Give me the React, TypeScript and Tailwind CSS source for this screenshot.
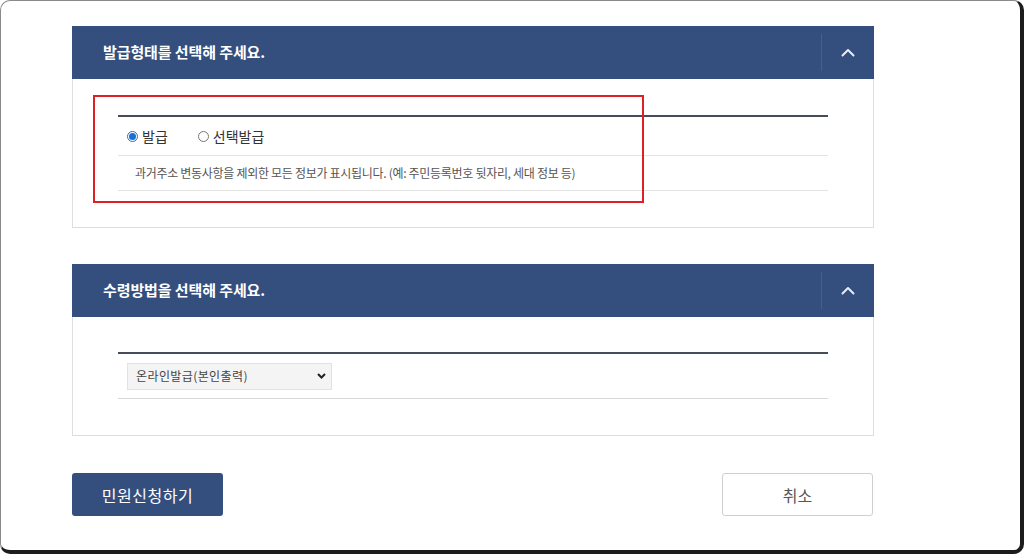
import { useState } from 'react';

const font = { fontFamily: '"Noto Sans CJK KR", "Noto Sans", sans-serif' };

function Chevron() {
  return (
    <svg width="14" height="9" viewBox="0 0 14 9" fill="none">
      <path d="M1.5 7.5L7 2L12.5 7.5" stroke="#e8edf6" strokeWidth="2" strokeLinecap="round" strokeLinejoin="round" />
    </svg>
  );
}

function PanelHeader({ title }: { title: string }) {
  return (
    <div className="flex h-[53px] items-center bg-[#344e7e]">
      <h2 className="flex-1 pl-[31px] text-[15px] font-bold tracking-[-0.1px] text-white">{title}</h2>
      <div className="h-[37px] w-px bg-[#45608f]" />
      <button type="button" className="flex h-full w-[52px] items-center justify-center">
        <Chevron />
      </button>
    </div>
  );
}

function Radio({ checked, label, onClick }: { checked: boolean; label: string; onClick: () => void }) {
  return (
    <label className="flex cursor-pointer items-center gap-[4px]" onClick={onClick}>
      {checked ? (
        <span className="flex h-[11px] w-[11px] items-center justify-center rounded-full border border-[#1a6fd6] bg-white">
          <span className="h-[7px] w-[7px] rounded-full bg-[#1a6fd6]" />
        </span>
      ) : (
        <span className="h-[11px] w-[11px] rounded-full border border-[#777] bg-white" />
      )}
      <span className="text-[14px] text-[#333]">{label}</span>
    </label>
  );
}

export default function App() {
  const [kind, setKind] = useState('issue');

  return (
    <div className="h-[554px] w-[1024px] overflow-hidden bg-white" style={font}>
      <div className="h-full w-full rounded-[10px] border-t border-l border-r-4 border-b-4 border-t-[#8a8a8a] border-l-[#8a8a8a] border-r-[#1c1c1c] border-b-[#1c1c1c] bg-white pl-[71px] pt-[25px]">
        <div className="flex w-[802px] flex-col">
          <section>
            <PanelHeader title="발급형태를 선택해 주세요." />
            <div className="relative border-x border-b border-[#dedede] px-[45px] pt-[36px] pb-[36px]">
              <div className="h-[2px] bg-[#474d58]" />
              <div className="flex h-[38px] items-center gap-[30px] pl-[9px]">
                <Radio checked={kind === 'issue'} label="발급" onClick={() => setKind('issue')} />
                <Radio checked={kind === 'select'} label="선택발급" onClick={() => setKind('select')} />
              </div>
              <div className="flex h-[36px] items-center border-y border-[#e3e3e3] pl-[17px] text-[12px] tracking-[-0.3px] text-[#555]">
                과거주소 변동사항을 제외한 모든 정보가 표시됩니다. (예: 주민등록번호 뒷자리, 세대 정보 등)
              </div>
              <div className="pointer-events-none absolute left-[20px] top-[16px] h-[108px] w-[551px] border-2 border-[#dd1f26]" />
            </div>
          </section>

          <section className="mt-[36px]">
            <PanelHeader title="수령방법을 선택해 주세요." />
            <div className="border-x border-b border-[#dedede] px-[45px] pt-[35px] pb-[36px]">
              <div className="h-[2px] bg-[#474d58]" />
              <div className="flex h-[45px] items-center border-b border-[#d8d8d8] pl-[9px]">
                <div className="flex h-[27px] w-[205px] cursor-pointer items-center border border-[#e2e2e2] bg-[#f4f4f4] text-[12px] tracking-[0.4px] text-[#444]">
                  <span className="ml-[8px] flex-1">온라인발급(본인출력)</span>
                  <svg className="mr-[5px]" width="9" height="6" viewBox="0 0 9 6" fill="none">
                    <path d="M1 1L4.5 4.5L8 1" stroke="#222" strokeWidth="2" />
                  </svg>
                </div>
              </div>
            </div>
          </section>

          <div className="mt-[37px] flex items-center justify-between">
            <button type="button" className="h-[43px] w-[151px] rounded-[3px] bg-[#344e7e] text-[16px] tracking-[0.5px] text-white">
              민원신청하기
            </button>
            <button type="button" className="mr-[1px] h-[43px] w-[151px] rounded-[3px] border border-[#cfcfcf] bg-white text-[16px] text-[#555]">
              취소
            </button>
          </div>
        </div>
      </div>
    </div>
  );
}
